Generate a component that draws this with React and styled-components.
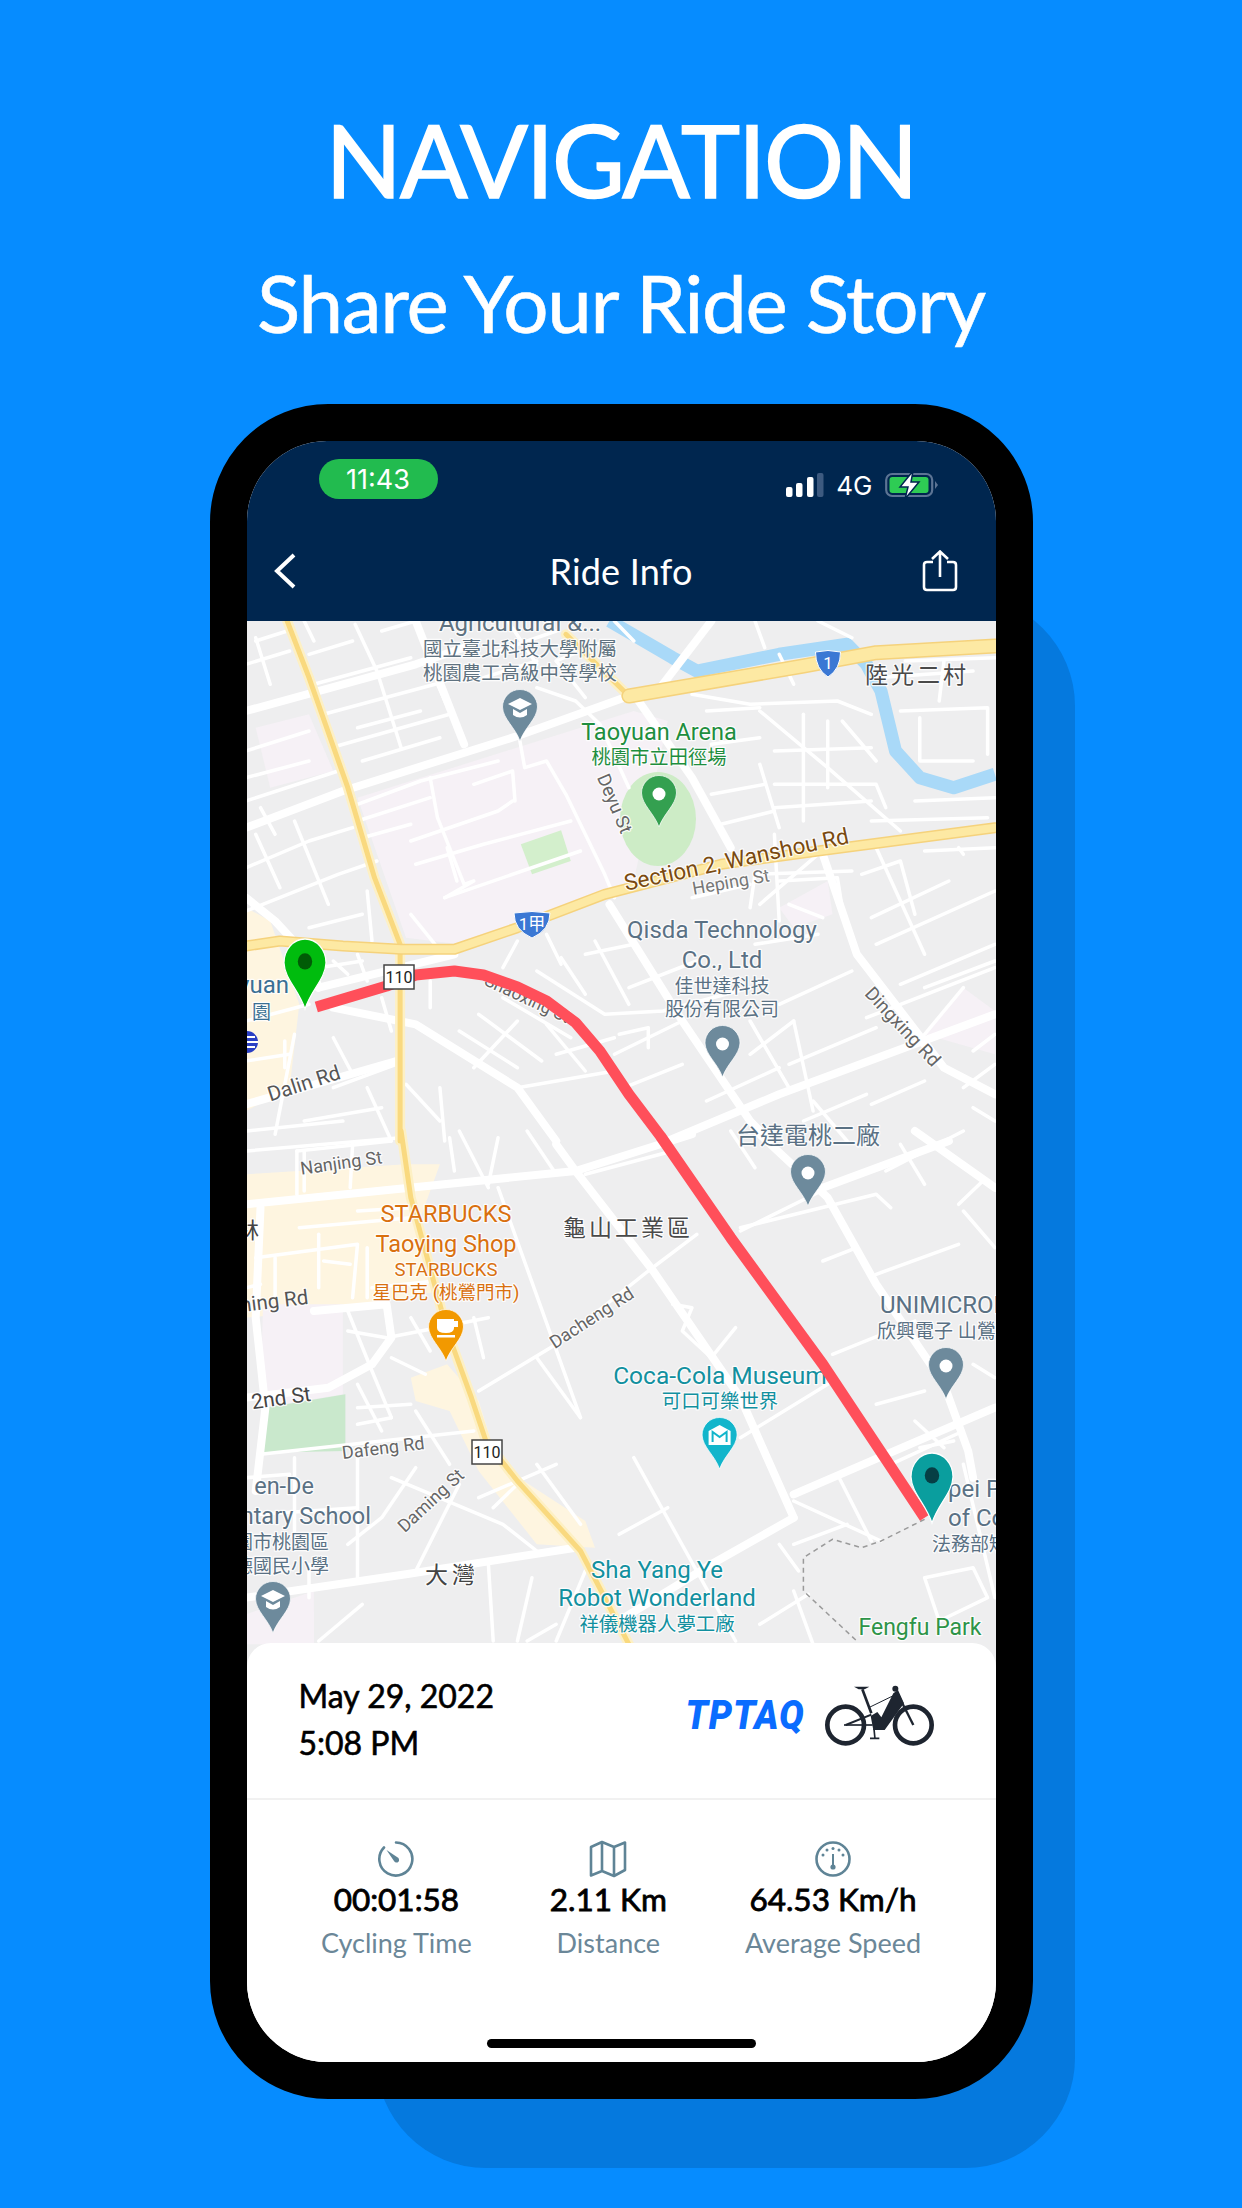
import styled, { createGlobalStyle } from "styled-components"

const GlobalStyle = createGlobalStyle`
  html, body { margin: 0; padding: 0; }
  body { background: #068cff; font-family: "Lato", "Noto Sans CJK TC", sans-serif; }
`

const Page = styled.div`
  width: 1242px;
  height: 2208px;
  overflow: hidden;
  background: #068cff;
  display: flex;
  flex-direction: column;
  align-items: center;
`

const Heading = styled.h1`
  margin: 104px 0 0;
  color: #fff;
  font-size: 100px;
  line-height: 110px;
  font-weight: 400;
  letter-spacing: -2px;
  -webkit-text-stroke: 1.6px #fff;
`

const SubHeading = styled.h2`
  margin: 43px 0 0;
  color: #fff;
  font-size: 80px;
  line-height: 90px;
  font-weight: 400;
  letter-spacing: -1.3px;
  -webkit-text-stroke: 0.6px #fff;
`

const PhoneWrap = styled.div`
  position: relative;
  margin-top: 57px;
  width: 823px;
  height: 1695px;
`

// darker block that peeks out behind the phone
const Shadow = styled.div`
  position: absolute;
  left: 166px;
  right: -42px;
  top: 192px;
  bottom: -69px;
  border-radius: 110px;
  background: #0579de;
`

const Phone = styled.div`
  position: relative;
  box-sizing: border-box;
  width: 100%;
  height: 100%;
  border: 37px solid #000;
  border-radius: 118px;
  background: #000;
`

const Screen = styled.div`
  width: 749px;
  height: 1621px;
  border-radius: 80px;
  overflow: hidden;
  background: #fff;
  display: flex;
  flex-direction: column;
`

const TopBar = styled.div`
  height: 180px;
  flex: none;
  background: #00264f;
  color: #fff;
  display: flex;
  flex-direction: column;
`

const StatusRow = styled.div`
  display: flex;
  align-items: center;
  justify-content: space-between;
  padding: 18px 57px 0 72px;
  height: 40px;
`

const TimePill = styled.div`
  width: 119px;
  height: 40px;
  border-radius: 20px;
  background: #22bb4f;
  display: flex;
  align-items: center;
  justify-content: center;
  font-family: "Inter", sans-serif;
  font-size: 27px;
`

const StatusIcons = styled.div`
  display: flex;
  align-items: center;
  gap: 12px;
  margin-top: 12px;
  font-family: "Inter", sans-serif;
  font-size: 26px;
`

const NavRow = styled.div`
  flex: 1;
  display: grid;
  grid-template-columns: 1fr auto 1fr;
  align-items: center;
  padding: 22px 26px 0;

  > :last-child {
    justify-self: end;
    margin-right: 12px;
  }
`

const NavTitle = styled.div`
  font-size: 36px;
  letter-spacing: 0.2px;
`

const MapWrap = styled.div`
  flex: none;
  height: 1046px;
  svg { display: block; }
`

const MapLabel = styled.text`
  font-family: "Roboto", "Noto Sans CJK TC", sans-serif;
  paint-order: stroke;
  stroke: rgba(255, 255, 255, 0.85);
  stroke-width: 2.5px;
  stroke-linejoin: round;
`

const Sheet = styled.div`
  position: relative;
  flex: 1;
  margin-top: -24px;
  border-radius: 24px 24px 0 0;
  background: #fff;
  display: flex;
  flex-direction: column;
`

const RideHead = styled.div`
  height: 157px;
  flex: none;
  box-sizing: border-box;
  border-bottom: 2px solid #f1f1f1;
  padding: 29px 62px 0 52px;
  display: flex;
  justify-content: space-between;
`

const DateText = styled.div`
  font-size: 32px;
  line-height: 47px;
  color: #000;
  -webkit-text-stroke: 0.6px #000;
`

const Brand = styled.div`
  display: flex;
  align-items: center;
  gap: 19px;
  margin-top: 12px;
  height: 62px;
`

const BrandName = styled.span`
  font-family: "Roboto", sans-serif;
  font-weight: 900;
  font-style: italic;
  font-size: 40px;
  letter-spacing: 1px;
  color: #0a6cff;
  transform: scaleX(0.92);
  transform-origin: right center;
`

const Stats = styled.div`
  display: flex;
  justify-content: center;
  gap: 78px;
  padding-top: 40px;
`

const Stat = styled.div`
  display: flex;
  flex-direction: column;
  align-items: center;
`

const StatValue = styled.div`
  margin-top: -1px;
  font-size: 31.5px;
  line-height: 44px;
  color: #000;
  white-space: nowrap;
  -webkit-text-stroke: 0.8px #000;
`

const StatLabel = styled.div`
  margin-top: 4px;
  font-size: 27px;
  line-height: 36px;
  color: #6b8798;
  white-space: nowrap;
`

const HomeBar = styled.div`
  position: absolute;
  left: 240px;
  bottom: 14px;
  width: 269px;
  height: 9px;
  border-radius: 5px;
  background: #000;
`

// map data is written in the coordinates of the two crops I traced from
const Y_TOP = 620
const Y_LOW = 1130
const pts = (flat, dy) => {
  const out = []
  for (let i = 0; i < flat.length; i += 2) {
    out.push(`${(245 + flat[i] / 2.063).toFixed(1)},${(dy + flat[i + 1] / 3).toFixed(1)}`)
  }
  return out.join(" ")
}

const majorTop = [
  [0, 270, 350, 130, 470, 70],
  [0, 620, 200, 510, 560, 345, 790, 225],
  [350, 0, 450, 370],
  [960, 0, 860, 190],
  [810, 240, 920, 470, 1000, 680],
  [750, 850, 900, 1200, 1040, 1500, 1080, 1560],
  [1190, 700, 1260, 1000, 1440, 1340, 1545, 1420],
  [150, 1100, 430, 1000],
  [180, 1160, 350, 1210, 560, 1400, 640, 1560],
  [0, 1450, 310, 1320],
  [870, 1560, 1100, 1420, 1545, 1180],
  [0, 830, 60, 900, 130, 1010, 150, 1100],
]

const minorTop = [
  [20, 60, 85, 30], [130, 100, 220, 60], [140, 190, 340, 110], [160, 280, 390, 190], [175, 380, 420, 280],
  [0, 390, 130, 330], [0, 130, 90, 90], [225, 10, 270, 150, 320, 380], [20, 50, 50, 190], [395, 190, 450, 370],
  [0, 740, 130, 660, 220, 620], [100, 600, 170, 850], [20, 640, 70, 800], [0, 870, 190, 760, 270, 720],
  [130, 920, 240, 880], [250, 810, 260, 960], [340, 880, 390, 970], [180, 1020, 210, 1060], [230, 1000, 250, 1080],
  [600, 200, 680, 240, 730, 310, 790, 500], [640, 120, 740, 60], [760, 0, 800, 60], [565, 360, 575, 440, 620, 420, 660, 520, 740, 760, 760, 830],
  [380, 470, 395, 590, 450, 790, 470, 780, 410, 830], [230, 550, 360, 480, 520, 420], [230, 600, 380, 530], [240, 650, 340, 610],
  [340, 660, 520, 570, 550, 540], [470, 490, 550, 450, 555, 540], [350, 730, 490, 670, 670, 600], [415, 680, 435, 780],
  [410, 830, 690, 690], [920, 220, 1040, 250, 1220, 240, 1290, 280], [1060, 270, 1200, 440, 1350, 630], [1230, 300, 1300, 420],
  [1090, 490, 1300, 490, 1320, 560], [1150, 280, 1150, 600], [1350, 270, 1530, 260, 1530, 400], [1390, 290, 1390, 420, 1500, 420],
  [960, 520, 1070, 490], [980, 610, 1090, 570], [1040, 860, 1050, 760, 1250, 750], [920, 830, 1040, 790], [1100, 780, 1220, 770, 1230, 860],
  [1120, 850, 1190, 890], [1270, 760, 1350, 720, 1380, 880], [1290, 890, 1450, 780], [1300, 970, 1545, 810], [1350, 1090, 1545, 970],
  [1400, 690, 1545, 680], [1470, 680, 1480, 700], [600, 1050, 740, 1180, 860, 1170, 1040, 1100], [700, 1000, 800, 970], [650, 1010, 700, 1120],
  [720, 960, 790, 1150], [530, 1040, 560, 960], [620, 940, 650, 1030], [790, 1100, 930, 1020], [480, 1180, 610, 1320], [530, 1130, 670, 1250],
  [440, 1230, 560, 1340], [620, 1210, 700, 1350], [770, 1240, 830, 1220, 830, 1280], [180, 1250, 220, 1360], [80, 1260, 80, 1340], [330, 1390, 400, 1500],
  [0, 1530, 200, 1500], [400, 1400, 410, 1560], [1040, 1300, 1130, 1200], [1130, 1200, 1170, 1470], [1280, 1190, 1545, 1040], [1500, 1290, 1545, 1240],
  [1170, 1440, 1240, 1560], [1290, 1450, 1400, 1380], [150, 1040, 240, 1020], [280, 1130, 300, 1230], [380, 1080, 380, 1160],
  // second pass, denser blocks
  [0, 470, 130, 420], [0, 540, 190, 450], [30, 560, 60, 640], [230, 320, 360, 270], [240, 420, 400, 350], [280, 30, 350, 0], [120, 0, 140, 60],
  [500, 100, 640, 30], [490, 170, 600, 120], [540, 0, 600, 130], [640, 120, 700, 230], [1100, 100, 1130, 190], [1050, 0, 1070, 80], [1180, 0, 1250, 50],
  [1360, 120, 1545, 110], [1440, 120, 1430, 240], [1300, 170, 1500, 150], [1090, 390, 1290, 380], [1200, 300, 1200, 500], [1090, 560, 1290, 540],
  [1290, 600, 1530, 590], [1380, 540, 1545, 530], [950, 270, 1060, 260], [960, 370, 1060, 350], [1060, 430, 1100, 620], [1090, 640, 1100, 900],
  [1180, 700, 1060, 850], [1300, 680, 1400, 1000], [1050, 970, 1180, 940], [1250, 1050, 1100, 1150], [1300, 1130, 1400, 1280], [1400, 1100, 1545, 1020],
  [1480, 1100, 1400, 1240], [1545, 1330, 1480, 1400], [1500, 1460, 1545, 1500], [1040, 1200, 1120, 1400], [950, 1440, 1100, 1340], [1150, 1500, 1280, 1420],
  [1120, 1330, 1300, 1220], [900, 1200, 760, 1300], [780, 1400, 900, 1330], [640, 1300, 760, 1250], [560, 1400, 760, 1350], [560, 1200, 470, 1340],
  [0, 1200, 130, 1150], [100, 1240, 60, 1540], [0, 1320, 90, 1300], [180, 1400, 310, 1330], [120, 1500, 280, 1460], [250, 1400, 300, 1560],
]

const majorLow = [
  [0, 220, 680, 120, 920, 10],
  [640, 40, 680, 120, 840, 420, 1020, 800, 1130, 1160],
  [1130, 1160, 960, 1300, 780, 1460],
  [1060, 10, 1200, 200, 1300, 460, 1440, 760, 1490, 960, 1500, 1040],
  [1190, 170, 1450, 30],
  [1380, 0, 1545, 170],
  [0, 1400, 330, 1330, 680, 1250],
  [30, 230, 20, 560, 40, 830, 20, 1080],
  [0, 800, 170, 770, 260, 700, 300, 620, 290, 520, 140, 540],
  [1130, 1090, 1545, 830],
]

const minorLow = [
  [105, 60, 300, 30], [105, 60, 105, 190], [220, 40, 215, 170], [420, 20, 430, 120], [580, 0, 640, 130],
  [520, 170, 690, 860], [480, 780, 640, 640, 830, 420, 930, 310], [600, 680, 690, 860], [110, 290, 340, 260],
  [20, 380, 230, 340, 220, 500], [215, 400, 160, 390], [250, 350, 250, 500], [210, 540, 260, 720, 300, 860], [300, 680, 370, 730],
  [290, 620, 500, 560], [470, 560, 490, 680], [230, 830, 340, 820], [230, 880, 300, 860], [30, 970, 470, 900], [100, 980, 100, 1200],
  [230, 960, 230, 1340], [350, 1010, 280, 1160, 210, 1240], [300, 1040, 530, 1180, 600, 1260], [440, 1060, 350, 1320], [500, 1300, 510, 1530],
  [560, 1060, 510, 1130], [1020, 300, 1200, 170], [1020, 290, 1300, 190, 1330, 230], [1190, 390, 1260, 350], [1300, 430, 1470, 340],
  [1210, 670, 1380, 570], [1300, 820, 1400, 780], [1020, 920, 1200, 760], [800, 980, 1010, 1530], [770, 1210, 870, 1130], [880, 520, 920, 530, 900, 600, 960, 680, 1010, 590],
  [1130, 1110, 1310, 1230], [1220, 1030, 1290, 1230], [1390, 950, 1460, 930], [1400, 1340, 1500, 1310, 1530, 1400, 1430, 1470, 1400, 1340],
  [1480, 1000, 1545, 1400], [1480, 240, 1545, 350], [1470, 220, 1520, 150], [1130, 1380, 1170, 1540], [240, 1420, 150, 1530],
  [590, 1340, 560, 1530], [640, 1480, 580, 1530], [0, 1040, 90, 1030], [1100, 1240, 1140, 1320],
  // second pass, denser blocks
  [0, 60, 320, 20], [120, 180, 120, 60], [440, 0, 500, 170], [500, 160, 520, 20], [340, 230, 230, 240], [60, 380, 60, 500], [150, 310, 150, 470],
  [260, 470, 390, 450], [0, 470, 30, 460], [210, 600, 290, 620], [230, 760, 280, 900], [340, 560, 380, 660], [480, 1100, 640, 1000], [600, 1000, 690, 1180],
  [30, 1150, 230, 1130], [130, 1300, 130, 1400], [700, 1320, 640, 1530], [1060, 1480, 1160, 1390], [1330, 1000, 1480, 900], [1380, 870, 1440, 950],
  [1500, 700, 1545, 740], [1350, 40, 1400, 160], [1320, 120, 1480, 0], [1130, 1240, 1240, 1180], [1000, 0, 1050, 110], [700, 130, 880, 60], [350, 840, 420, 1000],
]

const labels = [
  ["Agricultural &...", 519, 630, 24, "#5f7280"],
  ["國立臺北科技大學附屬", 519, 655, 19.4, "#5f7280"],
  ["桃園農工高級中等學校", 519, 679, 19.4, "#5f7280"],
  ["陸光二村", 916, 682, 23, "#4a4a4a", 0, 3],
  ["Taoyuan Arena", 658, 739, 23.5, "#1e8e3e"],
  ["桃園市立田徑場", 658, 763, 19.3, "#1e8e3e"],
  ["Deyu St", 608, 805, 18.5, "#666", 67],
  ["Section 2, Wanshou Rd", 737, 866, 22.5, "#7a4a10", -12],
  ["Heping St", 731, 887, 18, "#777", -10],
  ["Qisda Technology", 721, 937, 24, "#5a7184"],
  ["Co., Ltd", 721, 967, 24, "#5a7184"],
  ["佳世達科技", 721, 992, 19, "#5a7184"],
  ["股份有限公司", 721, 1015, 19, "#5a7184"],
  ["Shaoxing St", 524, 1003, 17.5, "#666", 25],
  ["Dingxing Rd", 897, 1030, 19, "#666", 47],
  ["Dalin Rd", 305, 1089, 20.5, "#555", -18],
  ["台達電桃二廠", 807, 1143, 24, "#5a7184"],
  ["Nanjing St", 341, 1168, 18, "#666", -8],
  ["STARBUCKS", 445, 1221, 23.5, "#d9700f"],
  ["Taoying Shop", 445, 1251, 23.5, "#d9700f"],
  ["STARBUCKS", 445, 1275, 18.5, "#d9700f"],
  ["星巴克 (桃鶯門市)", 445, 1298, 18.5, "#d9700f"],
  ["龜山工業區", 627, 1235, 23, "#4a4a4a", 0, 3],
  ["ning Rd", 274, 1307, 20.5, "#555", -7],
  ["Dacheng Rd", 594, 1322, 18, "#666", -33],
  ["2nd St", 281, 1404, 21, "#444", -8],
  ["Dafeng Rd", 383, 1453, 18, "#666", -7],
  ["Coca-Cola Museum", 719, 1383, 24.5, "#12909f"],
  ["可口可樂世界", 719, 1407, 19.4, "#12909f"],
  ["Daming St", 434, 1504, 18, "#666", -43],
  ["大灣", 451, 1582, 23, "#444", 0, 4],
  ["Sha Yang Ye", 656, 1577, 24, "#12909f"],
  ["Robot Wonderland", 656, 1605, 24, "#12909f"],
  ["祥儀機器人夢工廠", 656, 1630, 19.4, "#12909f"],
  ["Fengfu Park", 919, 1634, 23, "#2e9448"],
]

// clipped at the screen edge, so they hang from one end instead of the middle
const edgeLabels = [
  ["yuan", 288, 992, 24, "#3a6f93", "end"],
  ["園", 270, 1018, 19, "#3a6f93", "end"],
  ["林", 258, 1237, 22, "#444", "end"],
  ["en-De", 313, 1493, 23.5, "#5a7184", "end"],
  ["ntary School", 370, 1523, 23.5, "#5a7184", "end"],
  ["園市桃園區", 328, 1548, 19, "#5a7184", "end"],
  ["德國民小學", 328, 1572, 19, "#5a7184", "end"],
  ["UNIMICRON", 879, 1312, 24, "#5a7184", "start"],
  ["欣興電子 山鶯", 876, 1337, 19, "#5a7184", "start"],
  ["pei Prison", 947, 1496, 24, "#5a7184", "start"],
  ["of Correction", 947, 1525, 24, "#5a7184", "start"],
  ["法務部矯正署", 931, 1550, 19, "#5a7184", "start"],
]

const DROP = "M0 0 C-5 -14 -17 -22 -17.5 -34 A17.5 17.5 0 1 1 17.5 -34 C17 -22 5 -14 0 0 Z"

const Pin = ({ x, y, color, children }) => (
  <g transform={`translate(${x} ${y})`}>
    <path d={DROP} fill={color} stroke="#fff" strokeOpacity="0.7" strokeWidth="1" />
    {children || <circle cx="0" cy="-33" r="6.5" fill="#fff" />}
  </g>
)

const RouteMarker = ({ x, y, color, dot }) => (
  <g transform={`translate(${x} ${y}) scale(1.2 1.36)`}>
    <path d={DROP} fill={color} stroke="#fff" strokeWidth="1" />
    <circle cx="0" cy="-35" r="6" fill={dot} />
  </g>
)

const SchoolMark = () => (
  <g fill="#fff">
    <path d="M-12 -37 L0 -43 L12 -37 L0 -31 Z" />
    <path d="M-7 -32 V-26 Q0 -21 7 -26 V-32 L0 -28 Z" />
  </g>
)

const Shield = ({ x, y, w, text }) => (
  <g transform={`translate(${x} ${y})`}>
    <path
      d={`M${-w / 2} -11 Q0 -14 ${w / 2} -11 Q${w / 2} 6 0 14 Q${-w / 2} 6 ${-w / 2} -11 Z`}
      fill="#3b78d4"
      stroke="#fff"
    />
    <text x="0" y="6" textAnchor="middle" fontSize="17" fill="#fff" fontFamily="Roboto, 'Noto Sans CJK TC', sans-serif">
      {text}
    </text>
  </g>
)

const RouteBox = ({ x, y }) => (
  <g>
    <rect x={x - 15} y={y - 12} width="30" height="24" fill="#fff" stroke="#444" strokeWidth="1.5" />
    <text x={x} y={y + 6} textAnchor="middle" fontSize="16" fill="#222" fontFamily="Roboto, sans-serif">
      110
    </text>
  </g>
)

const RoadLayer = ({ rows, dy, width, color }) => (
  <g fill="none" stroke={color} strokeWidth={width} strokeLinecap="round" strokeLinejoin="round">
    {rows.map((r, i) => (
      <polyline key={i} points={pts(r, dy)} />
    ))}
  </g>
)

const thinHighwayTop = [
  [85, 0, 130, 170, 210, 500, 265, 770, 318, 970, 318, 1560],
  [660, 40, 790, 225],
]
const thinHighwayLow = [[320, 0, 340, 200, 415, 600, 465, 800, 495, 930, 560, 1050, 690, 1260, 790, 1540]]
const wideHighway = [[790, 225, 1150, 135, 1300, 95, 1545, 75]]
const midHighway = [[0, 975, 70, 960, 200, 975, 320, 985, 430, 985, 560, 920, 740, 820, 980, 730, 1180, 690, 1545, 620]]

const MapDrawing = () => (
  <svg width="749" height="1046" viewBox="246 620 749 1046">
    <rect x="246" y="620" width="749" height="1046" fill="#eeeeef" />

    {/* land use */}
    <polygon points={pts([230, 530, 800, 270, 870, 300, 800, 780, 440, 970, 330, 950], Y_TOP)} fill="#f6f1f6" />
    <polygon points={pts([20, 320, 130, 280, 180, 450, 50, 500], Y_TOP)} fill="#f6f1f6" />
    <polygon points={pts([1100, 860, 1200, 780, 1210, 880, 1130, 920], Y_TOP)} fill="#f6f1f6" />
    <polygon points={pts([1400, 1240, 1480, 1100, 1545, 1170, 1545, 1300], Y_TOP)} fill="#f6f1f6" />
    <polygon points={pts([0, 860, 50, 900, 110, 1150, 90, 1400, 0, 1470], Y_TOP)} fill="#fef5e0" />
    <polygon
      points={pts([0, 130, 330, 100, 400, 100, 350, 300, 370, 400, 400, 480, 210, 530, 0, 560], Y_LOW)}
      fill="#fef5e0"
    />
    <polygon
      points={pts([340, 740, 415, 700, 480, 810, 520, 1000, 700, 1170, 720, 1250, 600, 1240, 480, 1020, 420, 840, 350, 810], Y_LOW)}
      fill="#fef5e0"
    />
    <polygon points={pts([35, 520, 200, 520, 200, 790, 30, 830], Y_LOW)} fill="#f6f1f6" />
    <polygon points={pts([0, 1450, 140, 1380, 140, 1540, 0, 1540], Y_LOW)} fill="#f6f1f6" />
    <polygon points={pts([40, 830, 205, 790, 205, 960, 30, 965], Y_LOW)} fill="#c9e8cc" />
    <polygon points={pts([567, 670, 650, 628, 670, 720, 590, 760], Y_TOP)} fill="#d3efcc" />
    <ellipse cx="657" cy="818" rx="38" ry="47" fill="#cdecc6" />

    {/* river */}
    <polyline
      points={pts([750, 0, 880, 110, 930, 150, 1100, 100, 1240, 70, 1280, 130, 1310, 210, 1340, 390, 1390, 470, 1460, 500, 1545, 460], Y_TOP)}
      fill="none"
      stroke="#a9d9f8"
      strokeWidth="13"
      strokeLinejoin="round"
    />

    <RoadLayer rows={minorTop} dy={Y_TOP} width={3.5} color="#fff" />
    <RoadLayer rows={minorLow} dy={Y_LOW} width={3.5} color="#fff" />
    <RoadLayer rows={majorTop} dy={Y_TOP} width={8} color="#fff" />
    <RoadLayer rows={majorLow} dy={Y_LOW} width={8} color="#fff" />

    <RoadLayer rows={thinHighwayTop} dy={Y_TOP} width={10} color="#fdf0c4" />
    <RoadLayer rows={thinHighwayLow} dy={Y_LOW} width={10} color="#fdf0c4" />
    <RoadLayer rows={thinHighwayTop} dy={Y_TOP} width={5} color="#f9d97f" />
    <RoadLayer rows={thinHighwayLow} dy={Y_LOW} width={5} color="#f9d97f" />
    <RoadLayer rows={midHighway} dy={Y_TOP} width={11} color="#f5d27c" />
    <RoadLayer rows={midHighway} dy={Y_TOP} width={8} color="#fde9a3" />
    <RoadLayer rows={wideHighway} dy={Y_TOP} width={15} color="#f5d27c" />
    <RoadLayer rows={wideHighway} dy={Y_TOP} width={12} color="#fde9a3" />

    {/* footpath at the end of the ride */}
    <polyline
      points={pts([1400, 1165, 1310, 1230, 1270, 1250, 1210, 1225, 1150, 1280, 1150, 1380, 1260, 1530], Y_LOW)}
      fill="none"
      stroke="#9a9a9a"
      strokeWidth="1.5"
      strokeDasharray="5 4"
    />

    {labels.map(([text, x, y, size, color, rot, ls], i) => (
      <MapLabel
        key={i}
        x={x}
        y={y}
        fontSize={size}
        fill={color}
        textAnchor="middle"
        letterSpacing={ls || 0}
        transform={rot ? `rotate(${rot} ${x} ${y})` : undefined}
      >
        {text}
      </MapLabel>
    ))}
    {edgeLabels.map(([text, x, y, size, color, anchor], i) => (
      <MapLabel key={i} x={x} y={y} fontSize={size} fill={color} textAnchor={anchor}>
        {text}
      </MapLabel>
    ))}

    <Shield x={827} y={662} w={25} text="1" />
    <Shield x={531} y={923} w={36} text="1甲" />

    {/* the ride: first stretch from the upper crop, the rest from the lower */}
    <polyline
      points={[
        pts([145, 1158, 290, 1095, 350, 1062, 430, 1050, 490, 1062, 560, 1098, 620, 1140, 680, 1205, 730, 1290, 790, 1420, 855, 1545], Y_TOP),
        pts([1000, 320, 1190, 700, 1400, 1160], Y_LOW),
      ].join(" ")}
      fill="none"
      stroke="#ff4f5a"
      strokeWidth="11"
      strokeLinejoin="round"
    />

    <RouteBox x={398} y={976} />
    <RouteBox x={486} y={1451} />

    <circle cx="246" cy="1041" r="11" fill="#2a3fc4" />
    <path d="M246 1036 H254 M246 1041 H257 M246 1046 H254" stroke="#fff" strokeWidth="2" />

    <Pin x={519} y={740} color="#6d8a9c"><SchoolMark /></Pin>
    <Pin x={658} y={826} color="#34a050" />
    <Pin x={721.5} y={1076} color="#6d8a9c" />
    <Pin x={807} y={1205} color="#6d8a9c" />
    <Pin x={945} y={1398} color="#6d8a9c" />
    <Pin x={272} y={1632} color="#6d8a9c"><SchoolMark /></Pin>
    <Pin x={445} y={1360} color="#f29900">
      <path d="M-9 -42 H8 V-33 Q8 -28 0 -28 Q-9 -28 -9 -33 Z M8 -40 H12 V-34 H8" fill="#fff" />
      <rect x="-9" y="-26" width="18" height="2.5" fill="#fff" />
    </Pin>
    <Pin x={718.6} y={1468} color="#12b5cb">
      <path d="M-11 -38 L0 -44 L11 -38 V-24 H-11 Z" fill="#fff" />
      <path d="M-7 -27 V-37 L0 -32 L7 -37 V-27" fill="none" stroke="#12b5cb" strokeWidth="2" />
    </Pin>

    <RouteMarker x={304} y={1008} color="#00bc0e" dot="#005c06" />
    <RouteMarker x={931} y={1522} color="#0a9e9e" dot="#063f45" />
  </svg>
)

const ChevronIcon = () => (
  <svg width="24" height="36" viewBox="0 0 24 36">
    <path d="M21 2 L4 18 L21 34" fill="none" stroke="#fff" strokeWidth="4" />
  </svg>
)

const ShareIcon = () => (
  <svg width="36" height="42" viewBox="0 0 36 42">
    <path
      d="M11 12 H5 Q2 12 2 15 V37 Q2 40 5 40 H31 Q34 40 34 37 V15 Q34 12 31 12 H25"
      fill="none"
      stroke="#fff"
      strokeWidth="2.6"
    />
    <path d="M18 27 V2 M10 9 L18 1.5 L26 9" fill="none" stroke="#fff" strokeWidth="2.6" />
  </svg>
)

const SignalIcon = () => (
  <svg width="38" height="24" viewBox="0 0 38 24">
    <rect x="0" y="14" width="6.5" height="10" rx="2" fill="#fff" />
    <rect x="10" y="10" width="6.5" height="14" rx="2" fill="#fff" />
    <rect x="21" y="4" width="6.5" height="20" rx="2" fill="#fff" />
    <rect x="31" y="0" width="6.5" height="24" rx="2" fill="#3d5a80" />
  </svg>
)

const BatteryIcon = () => (
  <svg width="54" height="28" viewBox="0 0 54 28">
    <rect x="1.2" y="3" width="46" height="22" rx="6" fill="none" stroke="#5c7494" strokeWidth="2.2" />
    <rect x="4.5" y="6" width="39" height="16" rx="3" fill="#2ecc54" />
    <path d="M50 10 L53 14 L50 18 Z" fill="#5c7494" />
    <path d="M28 0 L15 16 H23 L20 28 L34 11 H26 Z" fill="#fff" stroke="#00264f" strokeWidth="1.5" />
  </svg>
)

const BikeIcon = () => (
  <svg width="110" height="62" viewBox="0 0 330 186">
    <g fill="none" stroke="#1e2530">
      <circle cx="65" cy="123" r="55" strokeWidth="14" />
      <circle cx="268" cy="123" r="55" strokeWidth="14" />
      <path d="M115 16 L142 88" strokeWidth="8" />
      <path d="M132 72 L206 36" strokeWidth="3" />
      <path d="M218 24 L268 123" strokeWidth="7" />
      <path d="M65 123 L142 92" strokeWidth="6" />
      <path d="M60 123 H146" strokeWidth="5" />
      <path d="M150 135 L153 165 M138 163 H166" strokeWidth="5" />
    </g>
    <g fill="#1e2530">
      <path d="M90 8 H136 L122 16 H104 Z" />
      <path d="M208 28 L222 18 L240 58 L182 138 H148 L140 96 L160 84 L172 100 Z" />
      <circle cx="214" cy="14" r="9" />
    </g>
  </svg>
)

const ClockIcon = () => (
  <svg width="38" height="38" viewBox="0 0 38 38">
    <path d="M19 2.5 A16.5 16.5 0 1 1 7 7.5" fill="none" stroke="#5f8496" strokeWidth="2.6" strokeLinecap="round" />
    <path d="M9.5 10 L21.5 18 Q23 21 20.5 22.5 Q18 23 17 21 Z" fill="#5f8496" />
  </svg>
)

const MapIcon = () => (
  <svg width="38" height="38" viewBox="0 0 38 38">
    <path
      d="M2 7 L13 2 L25 7 L36 2.5 V30 L25 36 L13 31 L2 35.5 Z M13 2 V31 M25 7 V36"
      fill="none"
      stroke="#5f8496"
      strokeWidth="2.6"
      strokeLinejoin="round"
    />
  </svg>
)

const GaugeIcon = () => (
  <svg width="38" height="38" viewBox="0 0 38 38">
    <circle cx="19" cy="19" r="16.5" fill="none" stroke="#5f8496" strokeWidth="2.6" />
    <path d="M19 14 V26" stroke="#5f8496" strokeWidth="2" />
    <circle cx="19" cy="27" r="2.6" fill="#5f8496" />
    <g fill="#5f8496">
      <circle cx="9" cy="15" r="1.5" />
      <circle cx="13" cy="10" r="1.5" />
      <circle cx="19" cy="8.5" r="1.5" />
      <circle cx="25" cy="10" r="1.5" />
      <circle cx="29" cy="15" r="1.5" />
    </g>
  </svg>
)

const stats = [
  { icon: <ClockIcon />, value: "00:01:58", label: "Cycling Time" },
  { icon: <MapIcon />, value: "2.11 Km", label: "Distance" },
  { icon: <GaugeIcon />, value: "64.53 Km/h", label: "Average Speed" },
]

export default function App() {
  return (
    <Page>
      <GlobalStyle />
      <Heading>NAVIGATION</Heading>
      <SubHeading>Share Your Ride Story</SubHeading>
      <PhoneWrap>
        <Shadow />
        <Phone>
          <Screen>
            <TopBar>
              <StatusRow>
                <TimePill>11:43</TimePill>
                <StatusIcons>
                  <SignalIcon />
                  <span>4G</span>
                  <BatteryIcon />
                </StatusIcons>
              </StatusRow>
              <NavRow>
                <ChevronIcon />
                <NavTitle>Ride Info</NavTitle>
                <ShareIcon />
              </NavRow>
            </TopBar>
            <MapWrap>
              <MapDrawing />
            </MapWrap>
            <Sheet>
              <RideHead>
                <DateText>
                  May 29, 2022
                  <br />
                  5:08 PM
                </DateText>
                <Brand>
                  <BrandName>TPTAQ</BrandName>
                  <BikeIcon />
                </Brand>
              </RideHead>
              <Stats>
                {stats.map(s => (
                  <Stat key={s.label}>
                    {s.icon}
                    <StatValue>{s.value}</StatValue>
                    <StatLabel>{s.label}</StatLabel>
                  </Stat>
                ))}
              </Stats>
              <HomeBar />
            </Sheet>
          </Screen>
        </Phone>
      </PhoneWrap>
    </Page>
  )
}
